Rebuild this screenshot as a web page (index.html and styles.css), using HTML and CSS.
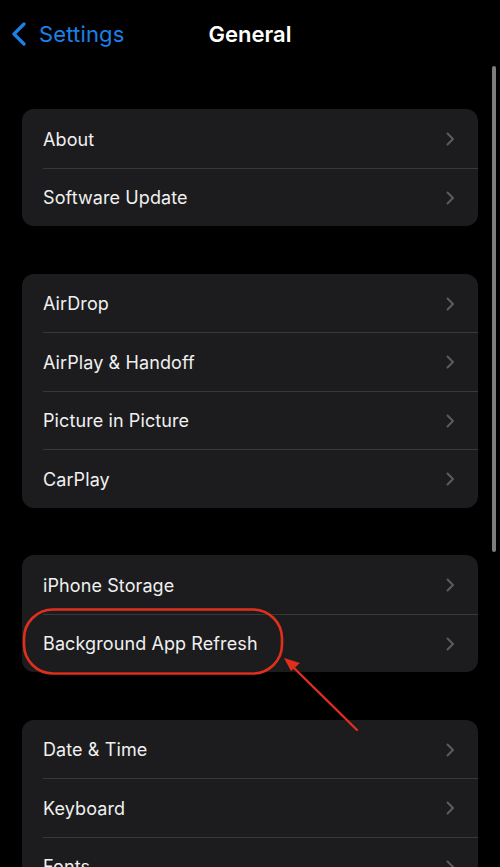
FILE: index.html
```html
<!DOCTYPE html>
<html>
<head>
<meta charset="utf-8">
<link rel="stylesheet" href="styles.css">
</head>
<body>
<div class="screen">
  <header class="nav">
    <div class="back">
      <svg class="back-icon" width="16" height="24" viewBox="0 0 16 24"><polyline points="13,2 3,12 13,22" fill="none" stroke="#1b80e8" stroke-width="3.2" stroke-linecap="round" stroke-linejoin="round"/></svg>
      <span class="back-label">Settings</span>
    </div>
    <div class="title">General</div>
  </header>
  <main class="content">
    <section class="group">
      <div class="row"><span>About</span><svg class="chev" width="9" height="14" viewBox="0 0 9 14"><polyline points="1.5,1.5 7,7 1.5,12.5" fill="none" stroke="#5b5b60" stroke-width="2" stroke-linecap="round" stroke-linejoin="round"/></svg></div>
      <div class="row"><span>Software Update</span><svg class="chev" width="9" height="14" viewBox="0 0 9 14"><polyline points="1.5,1.5 7,7 1.5,12.5" fill="none" stroke="#5b5b60" stroke-width="2" stroke-linecap="round" stroke-linejoin="round"/></svg></div>
    </section>
    <section class="group">
      <div class="row"><span>AirDrop</span><svg class="chev" width="9" height="14" viewBox="0 0 9 14"><polyline points="1.5,1.5 7,7 1.5,12.5" fill="none" stroke="#5b5b60" stroke-width="2" stroke-linecap="round" stroke-linejoin="round"/></svg></div>
      <div class="row"><span>AirPlay &amp; Handoff</span><svg class="chev" width="9" height="14" viewBox="0 0 9 14"><polyline points="1.5,1.5 7,7 1.5,12.5" fill="none" stroke="#5b5b60" stroke-width="2" stroke-linecap="round" stroke-linejoin="round"/></svg></div>
      <div class="row"><span>Picture in Picture</span><svg class="chev" width="9" height="14" viewBox="0 0 9 14"><polyline points="1.5,1.5 7,7 1.5,12.5" fill="none" stroke="#5b5b60" stroke-width="2" stroke-linecap="round" stroke-linejoin="round"/></svg></div>
      <div class="row"><span>CarPlay</span><svg class="chev" width="9" height="14" viewBox="0 0 9 14"><polyline points="1.5,1.5 7,7 1.5,12.5" fill="none" stroke="#5b5b60" stroke-width="2" stroke-linecap="round" stroke-linejoin="round"/></svg></div>
    </section>
    <section class="group">
      <div class="row"><span>iPhone Storage</span><svg class="chev" width="9" height="14" viewBox="0 0 9 14"><polyline points="1.5,1.5 7,7 1.5,12.5" fill="none" stroke="#5b5b60" stroke-width="2" stroke-linecap="round" stroke-linejoin="round"/></svg></div>
      <div class="row"><span>Background App Refresh</span><svg class="chev" width="9" height="14" viewBox="0 0 9 14"><polyline points="1.5,1.5 7,7 1.5,12.5" fill="none" stroke="#5b5b60" stroke-width="2" stroke-linecap="round" stroke-linejoin="round"/></svg></div>
    </section>
    <section class="group">
      <div class="row"><span>Date &amp; Time</span><svg class="chev" width="9" height="14" viewBox="0 0 9 14"><polyline points="1.5,1.5 7,7 1.5,12.5" fill="none" stroke="#5b5b60" stroke-width="2" stroke-linecap="round" stroke-linejoin="round"/></svg></div>
      <div class="row"><span>Keyboard</span><svg class="chev" width="9" height="14" viewBox="0 0 9 14"><polyline points="1.5,1.5 7,7 1.5,12.5" fill="none" stroke="#5b5b60" stroke-width="2" stroke-linecap="round" stroke-linejoin="round"/></svg></div>
      <div class="row"><span>Fonts</span><svg class="chev" width="9" height="14" viewBox="0 0 9 14"><polyline points="1.5,1.5 7,7 1.5,12.5" fill="none" stroke="#5b5b60" stroke-width="2" stroke-linecap="round" stroke-linejoin="round"/></svg></div>
    </section>
  </main>
  <div class="scrollbar"></div>
  <svg class="annotation" width="500" height="867" viewBox="0 0 500 867">
    <rect x="24" y="609.5" width="258" height="64" rx="29" ry="29" fill="none" stroke="#e0301c" stroke-width="2.6"/>
    <line x1="357" y1="730" x2="292" y2="666" stroke="#e0301c" stroke-width="2.4" stroke-linecap="round"/>
    <polygon points="284,658 300,663 291,671" fill="#e0301c"/>
  </svg>
</div>
</body>
</html>
```

FILE: styles.css
```css
html, body {
  margin: 0;
  padding: 0;
  background: #000;
}
body {
  font-family: Inter, "Noto Sans", sans-serif;
  color: #fff;
  overflow: hidden;
}
.screen {
  position: relative;
  width: 500px;
  height: 867px;
  overflow: hidden;
  background: #000;
}
.nav {
  position: relative;
  height: 68px;
  display: flex;
  align-items: center;
  justify-content: center;
}
.back {
  position: absolute;
  left: 11px;
  top: 21px;
  display: flex;
  align-items: center;
  gap: 12px;
}
.back-icon {
  display: block;
}
.back-label {
  color: #1b80e8;
  font-size: 22px;
  letter-spacing: 0.15px;
}
.title {
  font-size: 22px;
  font-weight: 600;
  margin-top: -1px;
}
.content {
  padding: 41px 22px 0 22px;
  display: flex;
  flex-direction: column;
  gap: 47.5px;
}
.group {
  background: #1c1c1e;
  border-radius: 12px;
  overflow: hidden;
}
.row {
  position: relative;
  height: 58.5px;
  box-sizing: border-box;
  padding: 2px 23px 0 21px;
  display: flex;
  align-items: center;
  justify-content: space-between;
  font-size: 18px;
  letter-spacing: 0.1px;
  color: #f0f0f0;
}
.row + .row::before {
  content: "";
  position: absolute;
  left: 21px;
  right: 0;
  top: 0;
  height: 1px;
  background: #38383b;
}
.chev {
  display: block;
}
.scrollbar {
  position: absolute;
  left: 492px;
  top: 66px;
  width: 3.5px;
  height: 486px;
  border-radius: 2px;
  background: #7d7d7f;
}
.annotation {
  position: absolute;
  left: 0;
  top: 0;
  pointer-events: none;
}
```
